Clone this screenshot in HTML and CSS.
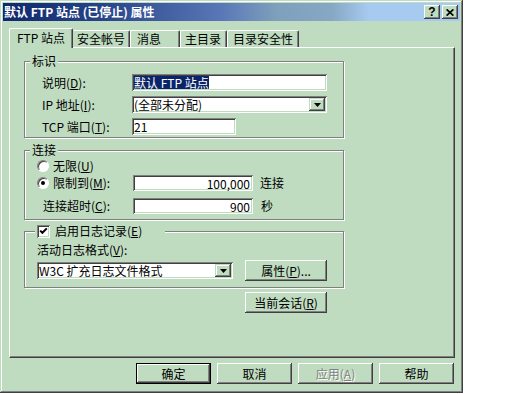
FILE: index.html
```html
<!DOCTYPE html>
<html lang="zh-CN">
<head>
<meta charset="utf-8">
<title>默认 FTP 站点 (已停止) 属性</title>
<link rel="stylesheet" href="styles.css">
</head>
<body>
<div class="window">
  <div class="titlebar">
    <span class="title">默认 FTP 站点 (已停止) 属性</span>
    <div class="caption-btns">
      <span class="cap-btn help">?</span>
      <span class="cap-btn"><svg width="8" height="7" viewBox="0 0 8 7"><path d="M0.6 0.4 L7.4 6.6 M7.4 0.4 L0.6 6.6" stroke="#000" stroke-width="1.7"/></svg></span>
    </div>
  </div>
  <div class="client">
    <div class="tabs">
      <div class="tab active t1">FTP 站点</div>
      <div class="tab t2">安全帐号</div>
      <div class="tab t3">消息</div>
      <div class="tab t4">主目录</div>
      <div class="tab t5">目录安全性</div>
    </div>
    <div class="panel">
      <div class="group g1">
        <div class="legend">标识</div>
        <div class="gbody rows">
          <div class="row"><span class="lbl">说明(<u>D</u>):</span><div class="field w195"><span class="sel">默认 FTP 站点</span></div></div>
          <div class="row"><span class="lbl">IP 地址(<u>I</u>):</span><div class="field combo w195"><span class="combo-text">(全部未分配)</span><span class="drop"><svg width="7" height="4" viewBox="0 0 7 4"><path d="M0 0H7L3.5 4Z" fill="#000"/></svg></span></div></div>
          <div class="row"><span class="lbl">TCP 端口(<u>T</u>):</span><div class="field w104">21</div></div>
        </div>
      </div>

      <div class="group g2">
        <div class="legend">连接</div>
        <div class="gbody">
          <div class="row r16 first">
            <span class="radio"></span><span class="opt-text">无限(<u>U</u>)</span>
          </div>
          <div class="row r16 second">
            <div class="lblbox"><span class="radio on"><span class="dot"></span></span><span class="opt-text">限制到(<u>M</u>):</span></div>
            <div class="field w120 h16 right">100,000</div>
            <span class="unit">连接</span>
          </div>
          <div class="row r16 third">
            <div class="lblbox indent">连接超时(<u>C</u>):</div>
            <div class="field w120 h16 right">900</div>
            <span class="unit unit2">秒</span>
          </div>
        </div>
      </div>

      <div class="group g3">
        <div class="legend check-legend"><span class="checkbox"><svg width="9" height="9" viewBox="0 0 9 9"><path d="M1.2 3.6 L3.4 5.8 L7.8 1.4" stroke="#000" stroke-width="2" fill="none"/></svg></span><span class="opt-text">启用日志记录(<u>E</u>)</span></div>
        <div class="gbody">
          <div class="plain-label">活动日志格式(<u>V</u>):</div>
          <div class="row r21">
            <div class="field combo w196"><span class="combo-text">W3C 扩充日志文件格式</span><span class="drop"><svg width="7" height="4" viewBox="0 0 7 4"><path d="M0 0H7L3.5 4Z" fill="#000"/></svg></span></div>
            <div class="btn w82 props">属性(<u>P</u>)...</div>
          </div>
        </div>
      </div>

      <div class="btn w82 session">当前会话(<u>R</u>)</div>
    </div>
    <div class="buttons">
      <div class="btn w75 default">确定</div>
      <div class="btn w75">取消</div>
      <div class="btn w75 disabled">应用(<u>A</u>)</div>
      <div class="btn w75">帮助</div>
    </div>
  </div>
</div>
</body>
</html>
```

FILE: styles.css
```css
* { box-sizing: border-box; }
html, body { margin: 0; padding: 0; background: #fff; }
body {
  width: 512px;
  height: 394px;
  overflow: hidden;
  font-family: "Noto Sans CJK SC", "Liberation Sans", sans-serif;
  font-size: 12px;
  line-height: 14px;
  color: #000;
}
u { text-decoration: underline; text-underline-offset: 1px; }

.window {
  width: 463px;
  height: 393px;
  background: #c0dcc0;
  padding: 3px;
  display: flex;
  flex-direction: column;
  box-shadow: inset -1px -1px #404040, inset 1px 1px #c0dcc0, inset -2px -2px #808080, inset 2px 2px #fff;
}

.titlebar {
  height: 18px;
  flex: none;
  display: flex;
  align-items: center;
  padding-left: 1px;
  background: linear-gradient(to right, #10286c 0%, #28458a 22%, #5a78b8 48%, #7fa0bc 60%, #86a8c4 72%, #a6caf0 80%, #a6caf0 100%);
  color: #fff;
  font-weight: bold;
  line-height: 18px;
  white-space: nowrap;
}
.caption-btns { margin-left: auto; display: flex; gap: 2px; padding-right: 2px; }
.cap-btn {
  width: 16px;
  height: 14px;
  background: #c0dcc0;
  color: #000;
  display: flex;
  align-items: center;
  justify-content: center;
  box-shadow: inset -1px -1px #404040, inset 1px 1px #fff, inset -2px -2px #808080;
}
.cap-btn.help { font-family: "Liberation Sans", sans-serif; font-size: 12px; font-weight: bold; line-height: 14px; padding-bottom: 1px; }

.client {
  flex: 1;
  display: flex;
  flex-direction: column;
  padding: 7px 5px 0 6px;
}

.tabs { display: flex; align-items: flex-end; height: 19px; flex: none; }
.tab {
  height: 17px;
  border-top: 1px solid #fff;
  border-left: 1px solid #fff;
  border-right: 1px solid #404040;
  box-shadow: inset -1px 0 #808080;
  border-radius: 2px 2px 0 0;
  padding-top: 1px;
  white-space: nowrap;
  background: #c0dcc0;
}
.tab.active {
  height: 20px;
  margin-bottom: -1px;
  padding-top: 2px;
  position: relative;
  z-index: 1;
}
.t1 { width: 64px; padding-left: 7px; }
.t2 { width: 57px; padding-left: 3px; border-left-color: #c0dcc0; }
.t3 { width: 50px; padding-left: 6px; }
.t4 { width: 47px; padding-left: 4px; }
.t5 { width: 72px; padding-left: 5px; }

.panel {
  height: 311px;
  flex: none;
  border-top: 1px solid #fff;
  border-left: 1px solid #fff;
  border-right: 1px solid #404040;
  border-bottom: 1px solid #404040;
  box-shadow: inset -1px -1px #808080;
  padding: 13px 0 0 14px;
}

.group {
  width: 320px;
  border: 1px solid #808080;
  box-shadow: inset 1px 1px #fff, 1px 1px #fff;
}
.g2 { margin-top: 12px; }
.g3 { margin-top: 11px; }

.legend {
  display: table;
  margin: -8px 0 0 5px;
  padding: 0 2px;
  background: #c0dcc0;
  line-height: 14px;
  white-space: nowrap;
}
.check-legend {
  display: flex;
  align-items: center;
  width: 130px;
  height: 14px;
  margin-left: 10px;
}

.g1 .gbody { padding: 6px 0 2px 17px; }
.rows { display: flex; flex-direction: column; gap: 5px; }
.row { display: flex; align-items: center; height: 17px; }
.lbl { width: 90px; flex: none; white-space: nowrap; }

.field {
  height: 17px;
  flex: none;
  background: #fff;
  padding: 2px 2px 0 2px;
  line-height: 13px;
  white-space: nowrap;
  box-shadow: inset 1px 1px #808080, inset -1px -1px #fff, inset 2px 2px #404040, inset -2px -2px #c0dcc0;
}
.w195 { width: 195px; }
.w196 { width: 196px; }
.w104 { width: 104px; }
.w120 { width: 120px; }
.h16 { height: 16px; }
.right { text-align: right; padding-right: 3px; }
.sel { display: inline-block; background: #0a246a; color: #fff; line-height: 13px; }

.combo { display: flex; align-items: stretch; padding: 2px; }
.combo-text { flex: 1; line-height: 13px; }
.drop {
  width: 16px;
  flex: none;
  background: #c0dcc0;
  display: flex;
  align-items: center;
  justify-content: center;
  box-shadow: inset -1px -1px #404040, inset 1px 1px #c0dcc0, inset -2px -2px #808080, inset 2px 2px #fff;
}

.g2 .gbody { padding: 1px 0 5px 12px; }
.r16 { height: 16px; }
.second { margin-top: 1px; }
.third { margin-top: 7px; }
.lblbox { width: 96px; flex: none; display: flex; align-items: center; white-space: nowrap; }
.lblbox.indent { padding-left: 6px; }
.opt-text { margin-left: 4px; white-space: nowrap; }
.unit { margin-left: 7px; }
.unit2 { margin-left: 8px; }

.radio {
  width: 12px;
  height: 12px;
  flex: none;
  border-radius: 50%;
  background: #fff;
  border: 1px solid;
  border-color: #808080 #fff #fff #808080;
  box-shadow: inset 1px 1px #404040;
  display: flex;
  align-items: center;
  justify-content: center;
}
.dot { width: 4px; height: 4px; border-radius: 50%; background: #000; }

.checkbox {
  width: 13px;
  height: 13px;
  flex: none;
  background: #fff;
  display: flex;
  align-items: center;
  justify-content: center;
  box-shadow: inset 1px 1px #808080, inset -1px -1px #fff, inset 2px 2px #404040, inset -2px -2px #c0dcc0;
}
.check-legend .opt-text { margin-left: 5px; }

.g3 .gbody { padding: 5px 0 6px 12px; }
.plain-label { line-height: 14px; white-space: nowrap; }
.r21 { height: 21px; margin-top: 3px; }
.props { margin-left: 12px; }

.btn {
  height: 21px;
  flex: none;
  background: #c0dcc0;
  display: flex;
  align-items: center;
  justify-content: center;
  white-space: nowrap;
  box-shadow: inset -1px -1px #404040, inset 1px 1px #fff, inset -2px -2px #808080;
}
.w82 { width: 82px; }
.w75 { width: 75px; }
.session { margin: 4px 0 0 221px; }
.btn.default { border: 1px solid #000; }
.btn.disabled { color: #808080; text-shadow: 1px 1px #fff; }

.buttons {
  display: flex;
  justify-content: flex-end;
  gap: 6px;
  margin-top: 5px;
  padding-right: 1px;
}
```
